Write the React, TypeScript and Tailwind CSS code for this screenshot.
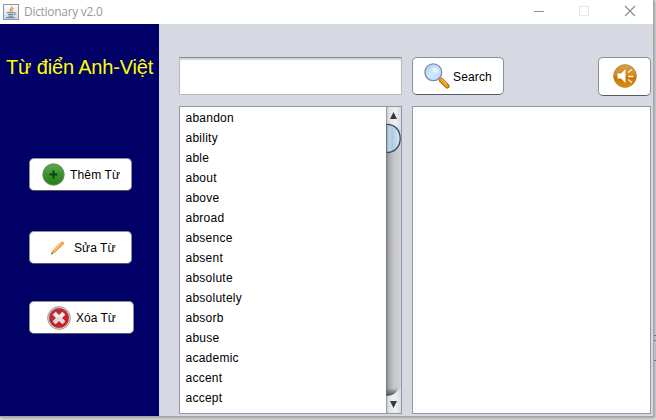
import type { ReactNode } from "react";

const words = [
  "abandon", "ability", "able", "about", "above", "abroad", "absence", "absent",
  "absolute", "absolutely", "absorb", "abuse", "academic", "accent", "accept",
];

function JavaIcon() {
  return (
    <svg width="16" height="16" viewBox="0 0 16 16" fill="none">
      <defs>
        <linearGradient id="java" x1="0" y1="0" x2="0" y2="1">
          <stop stopColor="#fff" />
          <stop offset="1" stopColor="#ccd6de" />
        </linearGradient>
      </defs>
      <rect x=".5" y=".5" width="15" height="15" fill="url(#java)" stroke="#8797a5" />
      <path d="M8.800 2.200c1.100 1.600-3 2.700-1.200 5.600M10.500 4.300c-2.400 1.200-1.800 1.800-1.200 3.200" stroke="#ee8a2c" strokeWidth="1.200" />
      <path d="M4 8.700h7M5 10.500h5.500M5.500 12.200h4.500M3 13.700h9M11 8.700c2.500-.2 2 1.800 0 2.300" stroke="#49759b" strokeWidth=".9" />
    </svg>
  );
}

function AddIcon() {
  return (
    <svg width="24" height="24" viewBox="0 0 24 24">
      <defs>
        <linearGradient id="add" x1="0" y1="0" x2="0" y2="1">
          <stop stopColor="#62a84d" />
          <stop offset=".5" stopColor="#39942a" />
          <stop offset="1" stopColor="#267d19" />
        </linearGradient>
      </defs>
      <circle cx="11.500" cy="11.500" r="10.700" fill="url(#add)" stroke="#68886a" />
      <path d="M11.500 7.500v8M7.500 11.500h8" stroke="#143f1c" strokeWidth="2" />
    </svg>
  );
}

function PencilIcon() {
  return (
    <svg width="16" height="16" viewBox="0 0 16 16">
      <path d="M2.500 10.500 11 2q1.500-1 2.500 0t0 2.200L5.200 12.500 1 14.500Z" fill="#ee9738" />
      <path d="m3.800 11 8.200-8.200" stroke="#ffc777" strokeWidth="1.100" />
      <path d="m2.300 11 2.500 1.700-3.800 1.800Z" fill="#cfae87" />
      <path d="m1 14.500.7-1.900 1.200 1.100Z" fill="#57483e" />
    </svg>
  );
}

function DeleteIcon() {
  return (
    <svg width="24" height="24" viewBox="0 0 24 24">
      <defs>
        <linearGradient id="del" x1="0" y1="0" x2="1" y2="1">
          <stop stopColor="#b53538" />
          <stop offset=".5" stopColor="#c8262a" />
          <stop offset="1" stopColor="#dc1313" />
        </linearGradient>
      </defs>
      <circle cx="12" cy="12" r="11.400" fill="#e3e3e3" stroke="#999b9b" />
      <circle cx="12" cy="12" r="9.800" fill="url(#del)" stroke="#b3383b" strokeWidth=".7" />
      <path d="m7.200 7.200 9.600 9.600m0-9.600-9.600 9.600" stroke="#edf0f0" strokeWidth="4.200" />
      <path d="m12 12 4.800 4.800M12 12l-4.800 4.800" stroke="#d7dada" strokeWidth="3" />
    </svg>
  );
}

function SearchIcon() {
  return (
    <svg width="26" height="26" viewBox="0 0 26 26">
      <defs>
        <linearGradient id="lens" x1="0" y1="0" x2="1" y2="1">
          <stop stopColor="#a5c9ef" />
          <stop offset=".5" stopColor="#d3eafb" />
          <stop offset="1" stopColor="#a9dafa" />
        </linearGradient>
      </defs>
      <path d="m15 15 2 2" stroke="#7476a8" strokeWidth="2.500" />
      <path d="m17 17 6.200 6.200" stroke="#a45b0c" strokeWidth="4.600" strokeLinecap="round" />
      <path d="m16.500 16.500 6.500 6.500" stroke="#f39b1c" strokeWidth="3" strokeLinecap="round" />
      <path d="m17.500 16 5 5" stroke="#ffcf6d" />
      <circle cx="9.300" cy="9.300" r="8.400" fill="url(#lens)" stroke="#8384ad" strokeWidth="1.300" />
      <circle cx="9.300" cy="9.300" r="7.100" fill="none" stroke="#bad9f5" />
      <path d="M8 5h4l3 3-1 2-4-1Z" fill="#edf8ff" opacity=".65" />
    </svg>
  );
}

function SoundIcon() {
  return (
    <svg width="24" height="24" viewBox="0 0 24 24">
      <defs>
        <linearGradient id="sound" x1="0" y1="0" x2="0" y2="1">
          <stop stopColor="#d4a04b" />
          <stop offset=".48" stopColor="#d28b20" />
          <stop offset=".52" stopColor="#c37402" />
          <stop offset="1" stopColor="#db8f0c" />
        </linearGradient>
      </defs>
      <circle cx="12" cy="12" r="11.400" fill="url(#sound)" stroke="#b78637" strokeWidth=".8" />
      <path d="M4.500 9.500H8l4.500-4.500v14L8 14.500H4.500Z" fill="#fff" />
      <path d="m15 8.500 4-3M15 12.500h5.500M15 15.500l4 3" stroke="#fff2d7" strokeWidth="1.300" />
    </svg>
  );
}

function Button({ className, children }: { className: string; children: ReactNode }) {
  return (
    <button
      className={`flex shrink-0 items-center rounded-[5px] border border-[#8b8f99] border-b-[#555b65] bg-white text-xs whitespace-nowrap text-black ${className}`}
    >
      {children}
    </button>
  );
}

function ScrollBar() {
  return (
    <svg className="shrink-0" width="15" height="306" viewBox="0 0 15 306">
      <defs>
        <linearGradient id="track">
          <stop stopColor="#777a80" />
          <stop offset=".15" stopColor="#a0a2a8" />
          <stop offset=".5" stopColor="#c3c5ca" />
          <stop offset="1" stopColor="#d0d2d7" />
        </linearGradient>
        <linearGradient id="cap">
          <stop stopColor="#c1c3c6" />
          <stop offset=".25" stopColor="#e3e5e7" />
          <stop offset=".6" stopColor="#eff0f1" />
          <stop offset="1" stopColor="#d8dce0" />
        </linearGradient>
        <linearGradient id="thumb">
          <stop stopColor="#8daac3" />
          <stop offset=".3" stopColor="#c4d8e9" />
          <stop offset=".4" stopColor="#adc6da" />
          <stop offset="1" stopColor="#d8edf8" />
        </linearGradient>
        <linearGradient id="foot" x1="0" y1="0" x2="0" y2="1">
          <stop stopColor="#55575c" stopOpacity="0" />
          <stop offset="1" stopColor="#444" />
        </linearGradient>
      </defs>
      <path d="M0 0h15v306H0Z" fill="url(#track)" />
      <path d="M0 0h15v25Q12 17 0 17Z" fill="url(#cap)" />
      <path d="M0 281h15q-4 7-15 8Z" fill="url(#foot)" />
      <path d="M0 289q8 0 11-5l4-4v26H0Z" fill="url(#cap)" />
      <path d="M0 17.500c8-.5 14.200 5 14.200 14S8 45.700 0 45.500Z" fill="url(#thumb)" stroke="#34495b" strokeWidth="1.300" />
      <path d="m4 12 3.500-7 3.500 7ZM4 294h7l-3.500 7Z" fill="#35383c" />
      <path d="M.5 0v306" stroke="#777b81" strokeOpacity=".55" />
    </svg>
  );
}

export default function App() {
  return (
    <div className="flex h-[420px] w-[656px] overflow-hidden bg-[#dedede] font-['Liberation_Sans',Arial,sans-serif]">
      <div className="flex h-[417px] w-[654px] shrink-0 flex-col border-r border-b border-[#a5a5a8] bg-[#d6d9e1] shadow-[1px_1px_3px_#999]">
        <header className="flex h-6 shrink-0 items-center bg-white pl-[3px]">
          <JavaIcon />
          <span className="ml-[5px] pb-px font-['Open_Sans','Noto_Sans',sans-serif] text-xs tracking-[-0.3px] text-[#999]">
            Dictionary v2.0
          </span>
          <svg className="ml-auto" width="130" height="24" fill="none">
            <path d="M11 11.500h10" stroke="#909090" />
            <path d="M56.500 6.500h9v9h-9Z" stroke="#e6e6e6" />
            <path d="m102 6 10 10m0-10-10 10" stroke="#8b8b8b" strokeWidth="1.100" />
          </svg>
        </header>
        <div className="flex min-h-0 flex-1">
          <aside className="flex w-[159px] shrink-0 flex-col items-start bg-[#000066] pl-[29px]">
            <h1 className="-ml-[23px] mt-[31px] h-6 text-xl leading-6 tracking-[-0.16px] whitespace-nowrap text-[#ffff00]">Từ điển Anh-Việt</h1>
            <Button className="mt-[79px] h-[33px] w-[103px] gap-1 pl-3">
              <AddIcon />
              <span className="tracking-[0.15px]">Thêm Từ</span>
            </Button>
            <Button className="mt-10 h-[33px] w-[103px] gap-2 pl-5">
              <PencilIcon />
              <span className="tracking-[0.05px]">Sửa Từ</span>
            </Button>
            <Button className="mt-[37px] h-[33px] w-[105px] gap-[5px] pl-[17px]">
              <DeleteIcon />
              <span>Xóa Từ</span>
            </Button>
          </aside>
          <main className="flex min-w-0 flex-1 flex-col gap-[11px] pt-[33px] pr-0.5 pb-0.5 pl-5">
            <div className="flex h-[38px] shrink-0">
              <input
                aria-label="Word"
                className="h-[38px] w-[223px] border border-[#b9babe] border-t-[#86888d] bg-white shadow-[inset_0_2px_1px_#d4d5d5] outline-none"
              />
              <Button className="ml-2.5 h-[38px] w-[92px] gap-[3px] pl-[11px]">
                <SearchIcon />
                <span className="pt-0.5 tracking-[0.15px]">Search</span>
              </Button>
              <Button className="ml-auto h-[39px] w-[53px] justify-center pb-0.5">
                <SoundIcon />
              </Button>
            </div>
            <div className="flex h-[308px] gap-2.5">
              <div className="flex w-[223px] border border-[#9297a1] bg-white">
                <ul className="min-w-0 flex-1 pt-px pl-[5.500px] text-xs tracking-[0.25px] text-black">
                  {words.map((word) => (
                    <li key={word} className="h-5 leading-5">{word}</li>
                  ))}
                </ul>
                <ScrollBar />
              </div>
              <div className="flex-1 border border-[#9297a1] bg-white" />
            </div>
          </main>
        </div>
      </div>
      <div className="relative flex h-[420px] w-0.5 flex-col pt-[335px]">
        <div className="h-px bg-[#77777a]" />
        <div className="mt-1 h-[21px] border-y border-[#77777a] bg-[#bdbdc0]" />
      </div>
    </div>
  );
}
